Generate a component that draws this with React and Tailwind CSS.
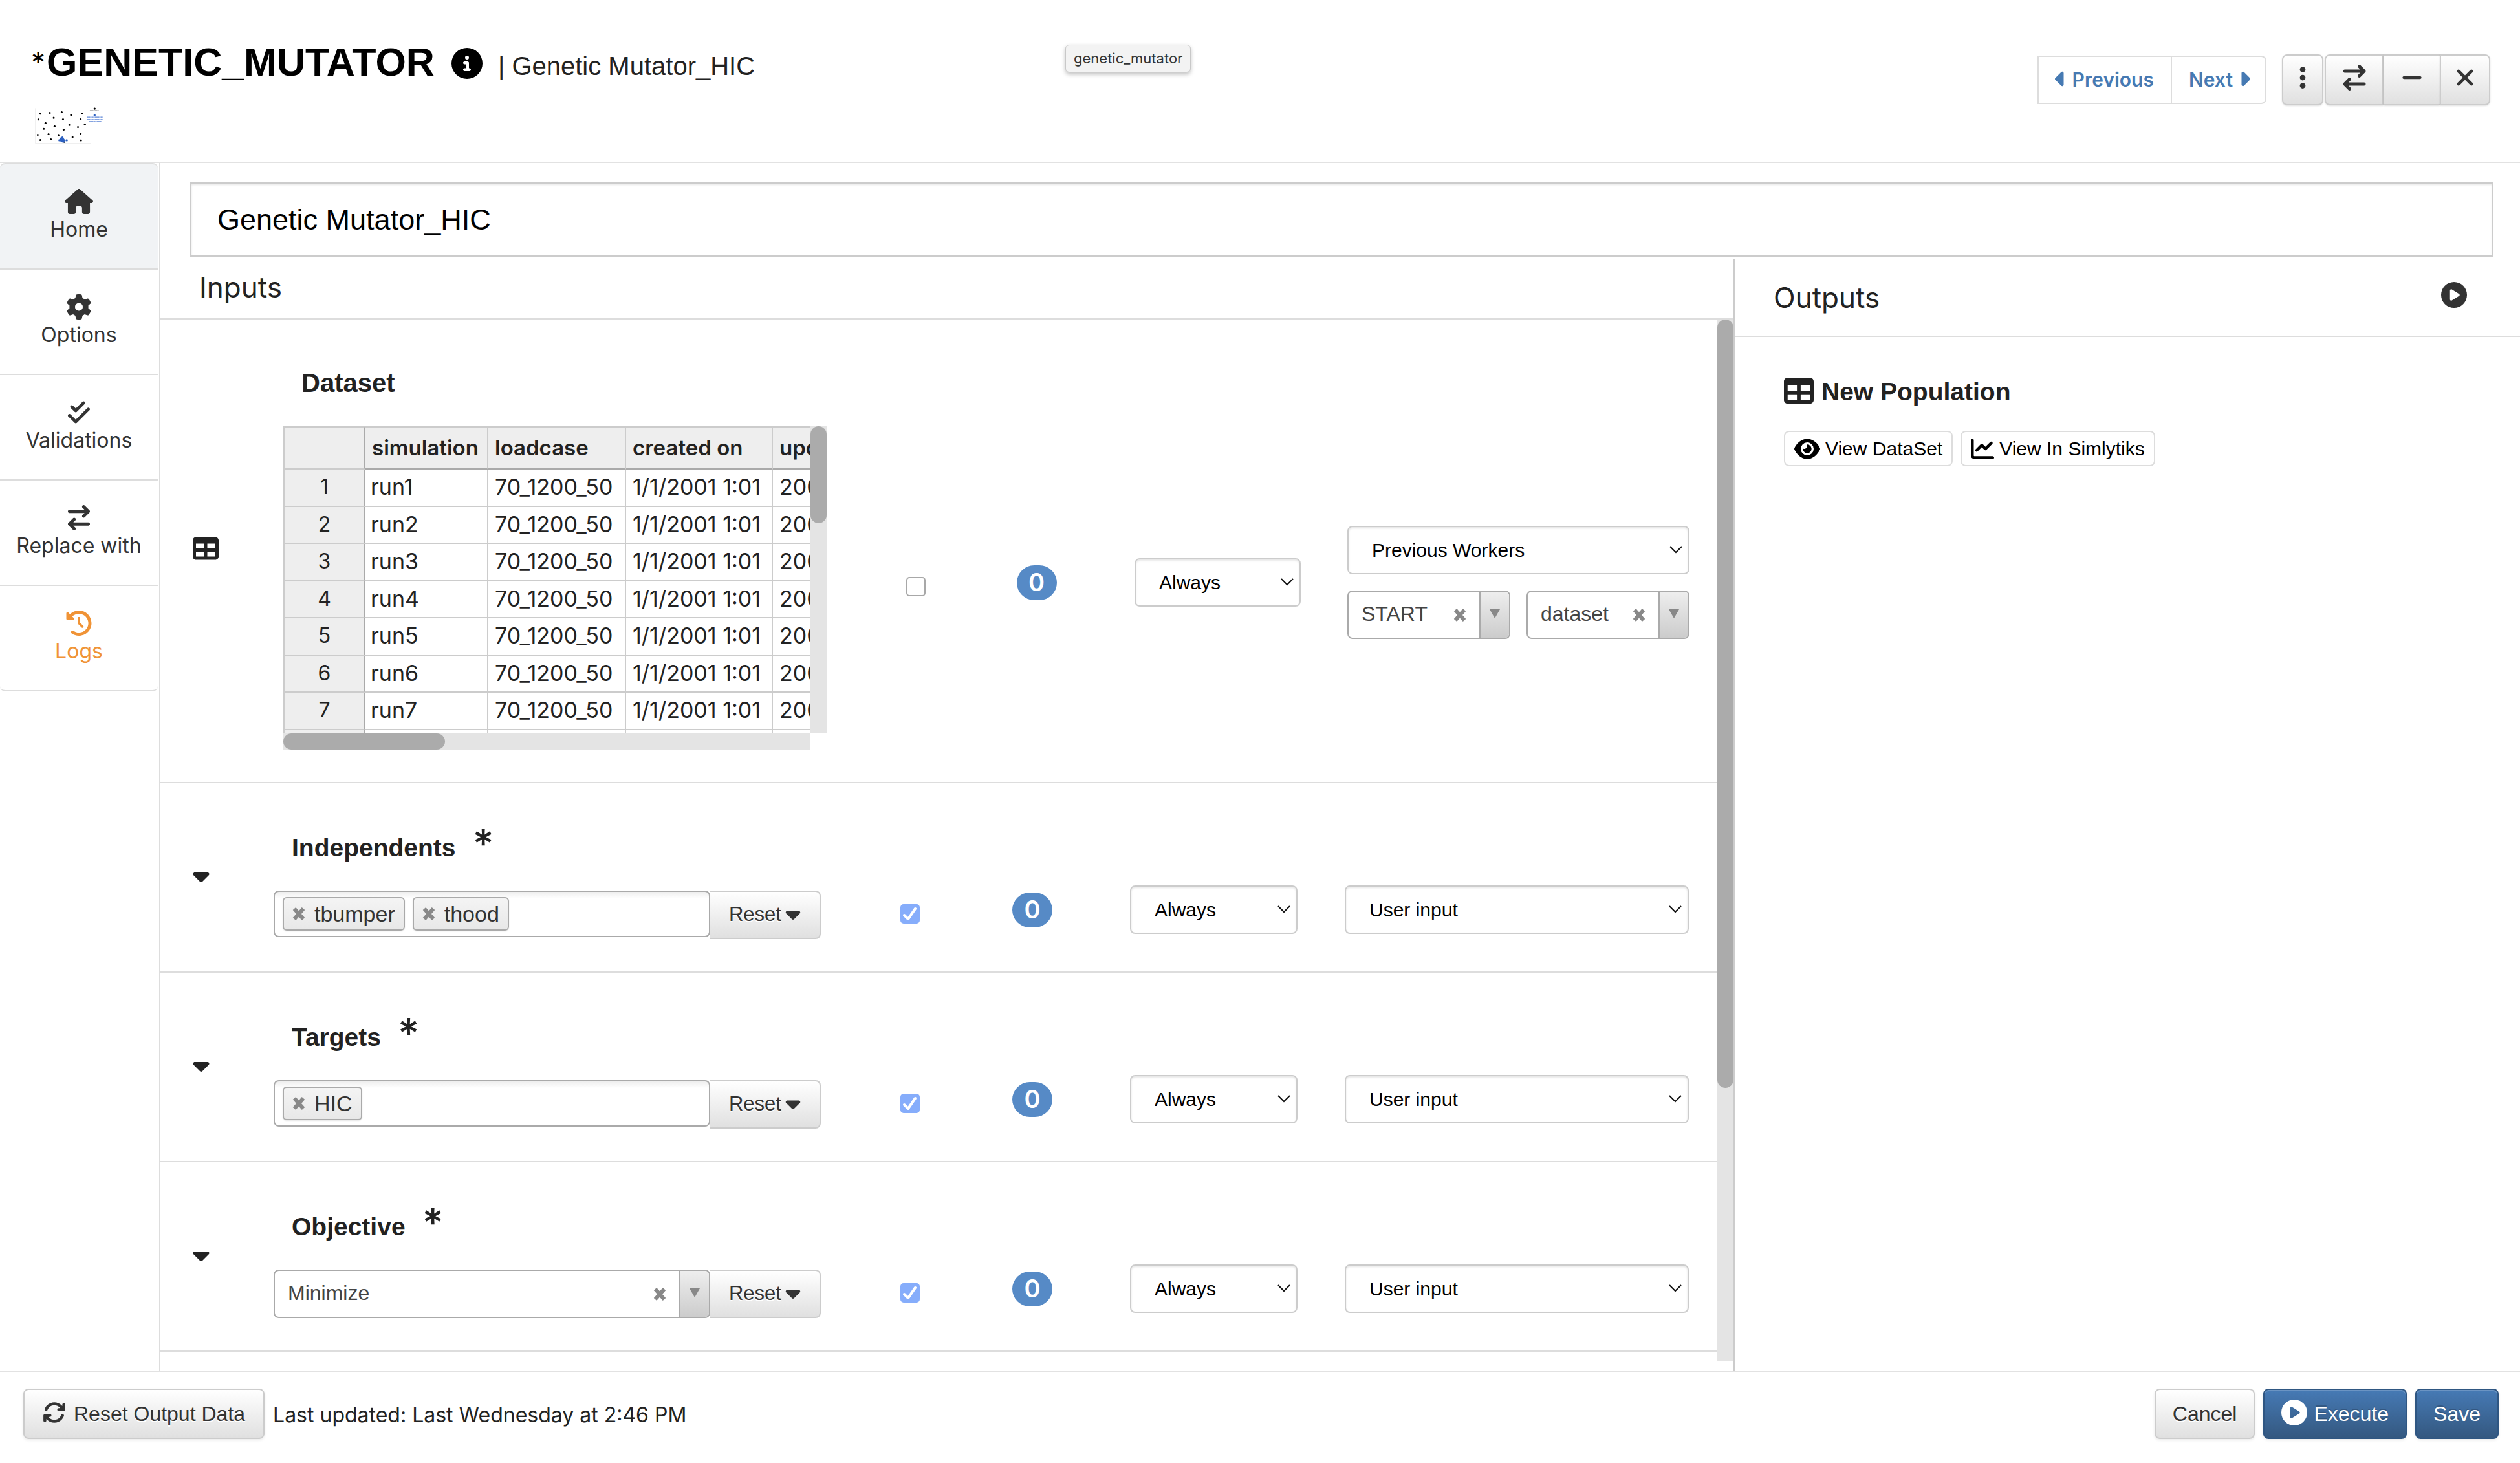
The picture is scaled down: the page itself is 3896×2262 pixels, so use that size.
import React from "react";
import {
  FaHouse,
  FaGear,
  FaCheckDouble,
  FaArrowRightArrowLeft,
  FaClockRotateLeft,
  FaCircleInfo,
  FaCirclePlay,
  FaCaretLeft,
  FaCaretRight,
  FaCaretDown,
  FaEllipsisVertical,
  FaMinus,
  FaXmark,
  FaTable,
  FaEye,
  FaChartLine,
  FaArrowsRotate,
} from "react-icons/fa6";

const helvetica = "font-['Liberation_Sans',sans-serif]";
const greyButton =
  "flex items-center justify-center border-2 border-[#cccccc] bg-linear-to-b from-white to-[#e0e0e0] text-[#333333] [text-shadow:0_2px_0_#ffffff] font-['Liberation_Sans',sans-serif]";
const blueButton =
  "flex h-[78px] items-center justify-center rounded-lg border-2 border-[#2f5682] bg-linear-to-b from-[#467ab5] to-[#345880] text-[32px] text-white shadow-[inset_0_2px_0_rgba(255,255,255,0.2),0_2px_4px_rgba(0,0,0,0.08)] [text-shadow:0_-2px_0_rgba(0,0,0,0.2)] font-['Liberation_Sans',sans-serif]";

const DOTS = [
  [95, 405], [139, 401], [194, 398], [237, 411], [288, 404], [86, 432], [157, 424],
  [200, 431], [281, 431], [119, 448], [161, 463], [229, 457], [269, 467], [301, 454],
  [111, 475], [203, 479], [83, 503], [133, 500], [179, 504], [281, 497], [244, 513],
  [95, 527], [144, 524], [283, 528], [206, 535],
];

function WorkerLogo() {
  return (
    <svg viewBox="70 376 320 170" className="h-[57px] w-[107px]" aria-hidden="true">
      <path d="M72 380V542H330" fill="none" stroke="#e4e4e4" strokeWidth="2" />
      {DOTS.map(([x, y]) => (
        <circle key={`${x}-${y}`} cx={x} cy={y} r="4.5" fill="#000000" />
      ))}
      <circle cx="346" cy="382" r="5" fill="#000000" />
      <path d="M324 391H366" stroke="#777777" strokeWidth="4" strokeDasharray="5 1" />
      <g fill="#2b5fc0">
        <circle cx="346" cy="412" r="5" />
        <circle cx="197" cy="515" r="5" />
        <circle cx="190" cy="520" r="5" />
        <circle cx="183" cy="528" r="5" />
        <circle cx="217" cy="528" r="5" />
        <path d="M186 522L202 518L212 530L208 538L196 538L186 532Z" />
      </g>
      <g stroke="#5b84d6" strokeWidth="4" strokeDasharray="6 1">
        <path d="M312 421H386" />
        <path d="M312 432H386" />
        <path d="M321 441H378" />
      </g>
    </svg>
  );
}

function CrossIcon() {
  return (
    <svg viewBox="0 0 20 20" className="size-5" aria-hidden="true">
      <path d="M3 2L17 18M17 2L3 18" stroke="#888888" strokeWidth="6" />
    </svg>
  );
}

const NAV = [
  {
    label: "Home",
    Icon: FaHouse,
    style: "h-[165px] rounded-t-lg border-t-2 bg-[#f1f3f5] text-[#333333]",
  },
  { label: "Options", Icon: FaGear, style: "h-[163px] text-[#333333]" },
  { label: "Validations", Icon: FaCheckDouble, style: "h-[163px] text-[#333333]" },
  { label: "Replace with", Icon: FaArrowRightArrowLeft, style: "h-[163px] text-[#333333]" },
  { label: "Logs", Icon: FaClockRotateLeft, style: "h-[163px] rounded-b-lg text-[#f09336]" },
];

function Sidebar() {
  return (
    <nav className="flex w-[248px] shrink-0 flex-col border-r-2 border-[#dddddd] pr-[2px]">
      {NAV.map(({ label, Icon, style }) => (
        <button
          key={label}
          type="button"
          className={`flex flex-col items-center gap-1 border-b-2 border-[#dddddd] pt-[38px] text-[32px] leading-10 ${style}`}
        >
          <Icon className="h-[39px] w-11" />
          <span>{label}</span>
        </button>
      ))}
    </nav>
  );
}

function SelectBox({ label, value }) {
  return (
    <div className={`relative ${helvetica}`}>
      <select
        aria-label={label}
        className="block h-[75px] w-full appearance-none rounded-lg border-2 border-[#cccccc] bg-white pl-9 pr-14 text-[30px] text-black shadow-[inset_0_2px_3px_rgba(0,0,0,0.1)]"
      >
        <option>{value}</option>
      </select>
      <svg
        viewBox="0 0 20 12"
        className="pointer-events-none absolute right-[11px] top-[31px] h-3 w-5"
        aria-hidden="true"
      >
        <path d="M1 1L10 10L19 1" fill="none" stroke="#111111" strokeWidth="2" />
      </svg>
    </div>
  );
}

function ComboBox({ label, value, className }) {
  return (
    <div
      className={`flex h-[75px] overflow-hidden rounded-lg border-2 border-[#aaaaaa] bg-white ${helvetica} ${className}`}
    >
      <select
        aria-label={label}
        className="min-w-0 flex-1 appearance-none pb-1 pl-5 text-[32px] text-[#444444]"
      >
        <option>{value}</option>
      </select>
      <button type="button" aria-label={`Clear ${label}`} className="px-5">
        <CrossIcon />
      </button>
      <span className="flex w-[46px] items-center justify-center border-l-2 border-[#aaaaaa] bg-linear-to-b from-[#eeeeee] to-[#cccccc]">
        <svg viewBox="0 0 16 14" className="mb-1 h-[14px] w-4" aria-hidden="true">
          <path d="M0 0H16L8 14Z" fill="#888888" />
        </svg>
      </span>
    </div>
  );
}

function TagBox({ label, tags }) {
  return (
    <div className="flex h-[72px] min-w-0 flex-1 items-center gap-3 rounded-lg border-2 border-[#aaaaaa] bg-white bg-linear-to-b from-[#eeeeee] to-white to-15% px-3">
      {tags.map((tag) => (
        <span
          key={tag}
          className={`flex h-[52px] items-center gap-[14px] rounded-md border-2 border-[#aaaaaa] bg-linear-to-b from-[#f4f4f4] to-[#e8e8e8] px-[13px] text-[34px] text-[#333333] shadow-[0_1px_2px_rgba(0,0,0,0.1)] ${helvetica}`}
        >
          <button type="button" aria-label={`Remove ${tag}`}>
            <CrossIcon />
          </button>
          {tag}
        </span>
      ))}
      <input type="text" aria-label={label} className="min-w-0 flex-1 bg-transparent outline-none" />
    </div>
  );
}

function CheckBox({ label, checked }) {
  return (
    <span className="relative mt-2 flex size-[30px]">
      <input
        type="checkbox"
        aria-label={label}
        defaultChecked={checked}
        className="size-[30px] appearance-none rounded-[5px] border-2 border-[#a8a8a8] bg-white checked:border-[#86adfb] checked:bg-[#86adfb]"
      />
      {checked && (
        <svg viewBox="0 0 30 30" className="pointer-events-none absolute inset-0" aria-hidden="true">
          <path
            d="M6 17L12 23L23 7"
            fill="none"
            stroke="#ffffff"
            strokeWidth="4"
            strokeLinecap="round"
            strokeLinejoin="round"
          />
        </svg>
      )}
    </span>
  );
}

function Badge() {
  return (
    <span className="flex h-[54px] w-[62px] items-center justify-center rounded-full bg-[#568ac6] text-[38px] font-semibold text-white">
      0
    </span>
  );
}

const COLUMNS = [
  { name: "simulation", width: "w-[190px]" },
  { name: "loadcase", width: "w-[213px]" },
  { name: "created on", width: "w-[227px]" },
  { name: "updated on", width: "w-[227px]" },
];

function DataGrid() {
  return (
    <div className="w-[840px]">
      <div className="flex h-[475px]">
        <div className="flex-1 overflow-hidden">
          <table className="w-[984px] table-fixed border-separate border-spacing-0 whitespace-nowrap text-left text-[#222222]">
            <thead>
              <tr className="h-[67px] bg-[#eeeeee] text-[33px]">
                <th className="w-[127px] border-2 border-[#cccccc] border-r-[#aaaaaa]" />
                {COLUMNS.map(({ name, width }) => (
                  <th
                    key={name}
                    className={`border-y-2 border-r-2 border-[#cccccc] border-b-[#aaaaaa] pl-[10px] font-semibold first-of-type:pl-2 ${width}`}
                  >
                    {name}
                  </th>
                ))}
              </tr>
            </thead>
            <tbody className="text-[34px] leading-10">
              {[1, 2, 3, 4, 5, 6, 7, 8].map((n) => (
                <tr key={n} className="h-[58px] even:h-[57px]">
                  <th className="border-x-2 border-b-2 border-[#cccccc] border-r-[#aaaaaa] bg-[#eeeeee] pb-[2px] text-center text-[32px] font-normal">
                    {n}
                  </th>
                  {[`run${n}`, "70_1200_50", "1/1/2001 1:01", "2001-01-01"].map((text, i) => (
                    <td
                      key={i}
                      className="overflow-hidden border-b-2 border-r-2 border-[#cccccc] pb-[2px] pl-[10px] first-of-type:pl-2"
                    >
                      {text}
                    </td>
                  ))}
                </tr>
              ))}
            </tbody>
          </table>
        </div>
        <div className="w-[25px] bg-[#e4e4e4]">
          <div className="h-[150px] rounded-full bg-[#ababab]" />
        </div>
      </div>
      <div className="mr-[25px] h-[25px] bg-[#e4e4e4]">
        <div className="h-full w-[250px] rounded-full bg-[#ababab]" />
      </div>
    </div>
  );
}

function InputRow({ name, children }) {
  return (
    <section className="grid h-[293px] shrink-0 grid-cols-[175px_1fr_276px_102px_100px_259px_73px_532px_44px] items-center border-b-2 border-[#dddddd]">
      <button type="button" aria-label={`Toggle ${name}`} className="mb-[6px] ml-[45px] flex w-9 justify-center">
        <FaCaretDown className="size-10 text-[#222222]" />
      </button>
      <div className="self-start pt-[58px]">
        <h3 className={`flex h-[108px] gap-[26px] pl-7 text-[39px] font-bold text-[#222222] ${helvetica}`}>
          <span className="pt-[13px]">{name}</span>
          <span className="font-['Inter',sans-serif] text-[64px] leading-[72px] font-medium">*</span>
        </h3>
        <div className="flex items-start">
          {children}
          <button
            type="button"
            className={`h-[75px] w-[171px] gap-[6px] rounded-r-lg border-l-0 text-[31px] ${greyButton}`}
          >
            Reset
            <FaCaretDown className="mb-1 h-9 w-6" />
          </button>
        </div>
      </div>
      <div className="mt-[104px] grid justify-items-center">
        <CheckBox label={`${name} required`} checked />
      </div>
      <div className="mt-[100px] grid justify-items-center">
        <Badge />
      </div>
      <span />
      <div className="mt-[100px]">
        <SelectBox label={`${name} condition`} value="Always" />
      </div>
      <span />
      <div className="mt-[100px]">
        <SelectBox label={`${name} source`} value="User input" />
      </div>
    </section>
  );
}

function Inputs() {
  return (
    <section className="flex w-2/3 min-w-0 flex-col">
      <h2 className="h-[94px] border-b-2 border-[#dddddd] pl-[60px] pt-4 text-[44px] leading-[56px] text-[#222222]">
        Inputs
      </h2>
      <div className="flex min-h-0 flex-1">
        <div className="flex min-w-0 flex-1 flex-col overflow-hidden">
          <section className="grid h-[717px] shrink-0 grid-cols-[190px_1fr_275px_99px_102px_257px_72px_529px_46px] items-center border-b-2 border-[#dddddd]">
            <FaTable className="mb-2 ml-[50px] size-10 text-[#222222]" />
            <div className="self-start pt-[73px]">
              <h3 className={`h-[92px] pl-7 text-[40px] leading-[50px] font-bold text-[#222222] ${helvetica}`}>
                Dataset
              </h3>
              <DataGrid />
            </div>
            <div className="mt-[102px] grid justify-items-center">
              <CheckBox label="Dataset required" checked={false} />
            </div>
            <div className="mt-[98px] grid justify-items-center">
              <Badge />
            </div>
            <span />
            <div className="mt-[98px]">
              <SelectBox label="Dataset condition" value="Always" />
            </div>
            <span />
            <div className="mt-[98px] flex flex-col gap-[25px]">
              <SelectBox label="Dataset source" value="Previous Workers" />
              <div className="flex gap-[25px]">
                <ComboBox label="Worker" value="START" className="min-w-0 flex-1" />
                <ComboBox label="Worker output" value="dataset" className="min-w-0 flex-1" />
              </div>
            </div>
          </section>
          <InputRow name="Independents">
            <TagBox label="Independents" tags={["tbumper", "thood"]} />
          </InputRow>
          <InputRow name="Targets">
            <TagBox label="Targets" tags={["HIC"]} />
          </InputRow>
          <InputRow name="Objective">
            <ComboBox label="Objective" value="Minimize" className="min-w-0 flex-1" />
          </InputRow>
        </div>
        <div className="mb-4 w-[25px] bg-[#e4e4e4]">
          <div className="h-[1188px] rounded-full bg-[#ababab]" />
        </div>
      </div>
    </section>
  );
}

function Outputs() {
  const viewButton =
    "flex h-[55px] items-center gap-2 rounded-lg border-2 border-[#dddddd] bg-white px-[14px] text-[30px] text-black font-['Liberation_Sans',sans-serif]";
  return (
    <section className="w-1/3 border-l-2 border-[#cccccc]">
      <div className="flex h-[121px] items-center justify-between border-b-2 border-[#dddddd] pl-[60px] pr-[82px]">
        <h2 className="text-[44px] text-[#222222]">Outputs</h2>
        <button type="button" aria-label="Run outputs" className="mb-2">
          <FaCirclePlay className="size-10 text-[#333333]" />
        </button>
      </div>
      <h3
        className={`flex items-center gap-3 pl-[76px] pt-[58px] text-[39px] leading-[54px] font-bold text-[#222222] ${helvetica}`}
      >
        <FaTable className="mb-1 size-[46px]" />
        New Population
      </h3>
      <div className="flex gap-3 pl-[76px] pt-[33px]">
        <button type="button" className={viewButton}>
          <FaEye className="h-9 w-10" />
          View DataSet
        </button>
        <button type="button" className={viewButton}>
          <FaChartLine className="size-9" />
          View In Simlytiks
        </button>
      </div>
    </section>
  );
}

function Header() {
  const navLink =
    "flex h-[75px] items-center border-2 border-[#dddddd] text-[30px] font-semibold text-[#467ab3]";
  return (
    <header className="relative flex h-[252px] shrink-0 justify-between border-b-2 border-[#e2e2e2] pl-12 pr-[46px]">
      <div className="pt-[60px]">
        <div className={`flex h-[72px] items-center ${helvetica}`}>
          <span className="mr-[2px] font-['Inter',sans-serif] text-[44px] leading-[72px] text-black">*</span>
          <h1 className="text-[61px] leading-[72px] font-bold text-black">GENETIC_MUTATOR</h1>
          <button type="button" aria-label="Information" className="ml-[26px] mt-1">
            <FaCircleInfo className="size-12 text-black" />
          </button>
          <p className="ml-6 pt-3 text-[40px] leading-[60px] text-[#222222]">| Genetic Mutator_HIC</p>
        </div>
        <div className="pl-[6px] pt-[34px]">
          <WorkerLogo />
        </div>
      </div>
      <div className="flex pt-[84px]">
        <div className="mr-6 flex pt-[2px]">
          <a href="#previous" className={`gap-[6px] pl-[22px] pr-[26px] ${navLink}`}>
            <FaCaretLeft className="mb-1 h-9 w-6" />
            Previous
          </a>
          <a href="#next" className={`gap-[6px] rounded-r-lg border-l-0 pl-[26px] pr-5 ${navLink}`}>
            Next
            <FaCaretRight className="mb-1 h-9 w-6" />
          </a>
        </div>
        <button type="button" aria-label="More" className={`h-[79px] w-16 rounded-lg shadow ${greyButton}`}>
          <FaEllipsisVertical className="mb-2 size-10" />
        </button>
        <div className="ml-[2px] flex h-[79px]">
          <button type="button" aria-label="Swap" className={`w-[91px] rounded-l-lg shadow ${greyButton}`}>
            <FaArrowRightArrowLeft className="mb-2 size-10" />
          </button>
          <button type="button" aria-label="Minimize" className={`w-[87px] border-x-0 shadow ${greyButton}`}>
            <FaMinus className="mb-2 size-9" />
          </button>
          <button type="button" aria-label="Close" className={`w-[78px] rounded-r-lg shadow ${greyButton}`}>
            <FaXmark className="mb-2 size-10" />
          </button>
        </div>
      </div>
      <div
        role="tooltip"
        className="absolute left-[1647px] top-[69px] flex h-[43px] items-center rounded-md border border-[#c8c8c8] bg-[#f3f3f3] px-3 text-[22px] text-[#333333] shadow-[0_3px_6px_rgba(0,0,0,0.25)]"
      >
        genetic_mutator
      </div>
    </header>
  );
}

function Footer() {
  return (
    <footer className="flex h-[142px] shrink-0 items-start gap-[13px] border-t-2 border-[#e2e2e2] pl-9 pr-[33px] pt-[25px]">
      <button
        type="button"
        className={`h-[78px] gap-3 rounded-lg px-7 text-[32px] shadow-[0_2px_4px_rgba(0,0,0,0.08)] ${greyButton}`}
      >
        <FaArrowsRotate className="mb-1 size-9" />
        Reset Output Data
      </button>
      <p className="flex-1 text-[32px] leading-[82px] text-[#222222]">
        Last updated: Last Wednesday at 2:46 PM
      </p>
      <button
        type="button"
        className={`h-[78px] rounded-lg px-[26px] text-[32px] shadow-[0_2px_4px_rgba(0,0,0,0.08)] ${greyButton}`}
      >
        Cancel
      </button>
      <button type="button" className={`gap-[10px] px-[26px] ${blueButton}`}>
        <FaCirclePlay className="mb-1 size-10" />
        Execute
      </button>
      <button type="button" className={`px-[26px] ${blueButton}`}>
        Save
      </button>
    </footer>
  );
}

export default function App() {
  return (
    <div className="flex h-screen flex-col overflow-hidden bg-white font-['Inter',sans-serif]">
      <Header />
      <div className="flex min-h-0 flex-1">
        <Sidebar />
        <main className="flex min-w-0 flex-1 flex-col">
          <div className="pb-[3px] pl-[46px] pr-[41px] pt-[30px]">
            <input
              type="text"
              aria-label="Worker name"
              defaultValue="Genetic Mutator_HIC"
              className={`block h-[115px] w-full border-2 border-[#cccccc] bg-white px-[40px] text-[45px] text-black shadow-[inset_0_2px_3px_rgba(0,0,0,0.1)] ${helvetica}`}
            />
          </div>
          <div className="flex min-h-0 flex-1">
            <Inputs />
            <Outputs />
          </div>
        </main>
      </div>
      <Footer />
    </div>
  );
}
